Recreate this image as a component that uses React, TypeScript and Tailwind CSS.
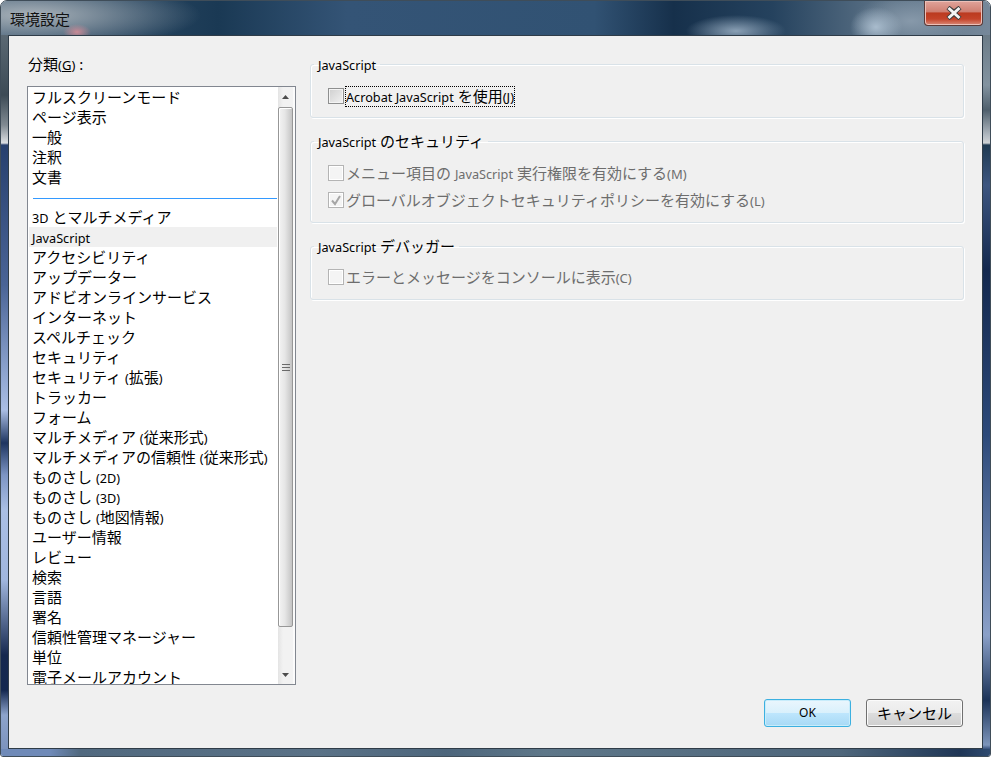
import { FC, ReactNode } from "react";

const FONT = "font-['Noto_Sans','Noto_Sans_CJK_JP',sans-serif]";

// Latin runs are set smaller than the kana around them
const L: FC<{ children: ReactNode }> = ({ children }) => (
  <span className="text-[12.7px]">{children}</span>
);

const Key: FC<{ k: string }> = ({ k }) => (
  <span className="text-[13px]">
    (<span className="underline">{k}</span>)
  </span>
);

const categories: ReactNode[] = [
  "フルスクリーンモード",
  "ページ表示",
  "一般",
  "注釈",
  "文書",
  null,
  <><L>3D</L> とマルチメディア</>,
  <L>JavaScript</L>,
  "アクセシビリティ",
  "アップデーター",
  "アドビオンラインサービス",
  "インターネット",
  "スペルチェック",
  "セキュリティ",
  <>セキュリティ <L>(</L>拡張<L>)</L></>,
  "トラッカー",
  "フォーム",
  <>マルチメディア <L>(</L>従来形式<L>)</L></>,
  <>マルチメディアの信頼性 <L>(</L>従来形式<L>)</L></>,
  <>ものさし <L>(2D)</L></>,
  <>ものさし <L>(3D)</L></>,
  <>ものさし <L>(</L>地図情報<L>)</L></>,
  "ユーザー情報",
  "レビュー",
  "検索",
  "言語",
  "署名",
  "信頼性管理マネージャー",
  "単位",
  "電子メールアカウント",
];

const Arrow: FC<{ down?: boolean }> = ({ down }) => (
  <svg width="7" height="4" viewBox="0 0 7 4" className="block">
    <path d={down ? "M0 0h7L3.5 4z" : "M3.5 0L7 4H0z"} fill="#4d4d4d" />
  </svg>
);

const Scrollbar: FC = () => (
  <div className="flex w-[17px] shrink-0 flex-col bg-[linear-gradient(90deg,#e4e4e4,#f2f2f2_30%,#f2f2f2_88%,#fbfbfb_88%)]">
    <div className="flex h-[20px] w-[15px] shrink-0 items-center justify-center">
      <Arrow />
    </div>
    <div className="flex h-[520px] w-[15px] shrink-0 flex-col items-center justify-center gap-[2px] rounded-[2px] border border-[#979797] bg-[linear-gradient(90deg,#f3f3f3,#e6e6e6_45%,#c4c4c4)] shadow-[inset_1px_1px_0_#fff]">
      <span className="h-px w-[8px] bg-[#6a6a6a]" />
      <span className="h-px w-[8px] bg-[#6a6a6a]" />
      <span className="h-px w-[8px] bg-[#6a6a6a]" />
    </div>
    <div className="flex-1" />
    <div className="flex h-[19px] w-[15px] shrink-0 items-center justify-center">
      <Arrow down />
    </div>
  </div>
);

const CategoryList: FC = () => (
  <div className="flex h-[599px] overflow-hidden border border-[#828790] bg-white">
    <ul className="min-w-0 flex-1 pl-px pr-px text-[15px] leading-[20px] text-black">
      {categories.map((item, i) =>
        item === null ? (
          <li key={i} className="flex h-[20px] items-center pl-[4px] pt-[2px]">
            <span className="h-px w-full bg-[#3399ff]" />
          </li>
        ) : (
          <li
            key={i}
            className={`h-[20px] whitespace-nowrap pl-[3px] ${i === 7 ? "bg-[#f0f0f0]" : ""}`}
          >
            {item}
          </li>
        ),
      )}
    </ul>
    <Scrollbar />
  </div>
);

const Checkbox: FC<{ checked?: boolean; disabled?: boolean }> = ({ checked, disabled }) => (
  <span
    className={`flex size-[16px] shrink-0 items-center justify-center border ${
      disabled
        ? "border-[#b4b4b4] bg-[#f4f4f4] shadow-[inset_0_0_0_1px_#fff]"
        : "border-[#8e8f8f] bg-[linear-gradient(135deg,#cfcfcf,#f2f2f2)] shadow-[inset_0_0_0_1px_#f4f4f4]"
    }`}
  >
    {checked && (
      <svg width="12" height="12" viewBox="0 0 12 12">
        <path d="M2 6.5l3 3.5 5-8" fill="none" stroke="#a6a6a6" strokeWidth="2" />
      </svg>
    )}
  </span>
);

const Group: FC<{ title: ReactNode; className?: string; children: ReactNode }> = ({
  title,
  className,
  children,
}) => (
  <fieldset
    className={`rounded-[3px] border border-[#d9e2e8] pb-[12px] pl-[17px] shadow-[inset_1px_1px_0_#fff,1px_1px_0_#fff] ${className ?? ""}`}
  >
    <legend className="ml-[-14px] px-[4px] text-[15px] leading-[18px] text-black">{title}</legend>
    {children}
  </fieldset>
);

const DisabledRow: FC<{ className?: string; children: ReactNode }> = ({ className, children }) => (
  <div className={`flex h-[20px] items-center gap-[2px] text-[15px] text-[#6d6d6d] ${className ?? ""}`}>
    <Checkbox disabled={true} checked={false} />
    <span className="whitespace-nowrap">{children}</span>
  </div>
);

const App: FC = () => {
  return (
    <div
      className={`flex h-[757px] w-[991px] flex-col overflow-hidden rounded-t-[7px] rounded-b-[3px] border border-[#3f4d59] shadow-[inset_0_1px_0_#e4e9ee] ${FONT}`}
    >
      <header className="flex h-[34px] shrink-0 items-start justify-between bg-[radial-gradient(14px_8px_at_76px_31px,#c98a96,transparent),radial-gradient(170px_34px_at_30px_14px,#a9b2b9,transparent),radial-gradient(50px_16px_at_735px_30px,#8aa0b5,transparent),radial-gradient(26px_20px_at_875px_26px,#a9bccd,transparent),radial-gradient(60px_26px_at_910px_20px,#8799aa,transparent),linear-gradient(90deg,#3a5670,#1a3954_22%,#345476_35%,#315273_60%,#16304b_68%,#25425e_78%,#5f7589_90%,#76889a)] pl-[9px] pr-[7px]">
        <h1 className="pt-[7px] text-[15px] font-normal leading-[22px] text-[#111]">環境設定</h1>
        <button
          type="button"
          className="flex h-[25px] w-[59px] items-center justify-center rounded-b-[4px] border border-t-0 border-[#5a3a38] bg-[linear-gradient(#e0a49b,#cf7f72_45%,#bb3a20_50%,#c4432a_75%,#d98a78)] shadow-[inset_0_0_0_1px_#ecc0b8]"
        >
          <svg width="16" height="14" viewBox="0 0 16 14">
            <path
              d="M2 1.5l6 4.5 6-4.5M2 12.5l6-5 6 5M2 1.5l12 11M14 1.5l-12 11"
              fill="none"
              stroke="#3b3b3b"
              strokeWidth="4.5"
            />
            <path d="M2.5 2l11 10M13.5 2l-11 10" fill="none" stroke="#f4f4f4" strokeWidth="3" />
          </svg>
        </button>
      </header>
      <div className="flex flex-1">
        <div className="w-[7px] shrink-0 bg-[linear-gradient(#5a6873,#3c4a55_60px,#808a92_90px,#dcdfe2_108px,#27406e_110px,#4a6496_250px,#8fa6d0_340px,#aabee4_375px,#1e3560_408px,#7d95c4_440px,#aabfe4_475px,#a0b6de_545px,#16294f_620px,#14284f_655px,#8da4cc_680px,#7c93bd)]" />
        <main className="flex flex-1 flex-col border border-[#2f3c48] bg-[#f0f0f0]">
          <div className="flex gap-[14px] pl-[18px] pt-[19px]">
            <section className="w-[269px] shrink-0">
              <div className="mb-[12px] pl-px text-[15px] leading-[18px] text-black">
                分類<Key k="G" /> :
              </div>
              <CategoryList />
            </section>
            <section className="flex w-[654px] flex-col">
              <Group title={<L>JavaScript</L>} className="h-[63px]">
                <div className="mt-[12px] flex h-[20px] items-center gap-[2px]">
                  <Checkbox />
                  <span className="whitespace-nowrap text-[15px] leading-[18px] text-black outline-1 outline-dotted outline-black">
                    <L>Acrobat JavaScript</L> を使用<Key k="J" />
                  </span>
                </div>
              </Group>
              <Group
                title={<><L>JavaScript</L> のセキュリティ</>}
                className="mt-[14px] h-[91px]"
              >
                <DisabledRow className="mt-[12px]">
                  メニュー項目の <L>JavaScript</L> 実行権限を有効にする<span className="text-[13px]">(M)</span>
                </DisabledRow>
                <div className="mt-[7px] flex h-[20px] items-center gap-[2px] text-[15px] text-[#6d6d6d]">
                  <Checkbox disabled={true} checked={true} />
                  <span className="whitespace-nowrap">
                    グローバルオブジェクトセキュリティポリシーを有効にする<span className="text-[13px]">(L)</span>
                  </span>
                </div>
              </Group>
              <Group
                title={<><L>JavaScript</L> デバッガー</>}
                className="mt-[14px] h-[63px]"
              >
                <DisabledRow className="mt-[11px]">
                  エラーとメッセージをコンソールに表示<span className="text-[13px]">(C)</span>
                </DisabledRow>
              </Group>
            </section>
          </div>
          <footer className="mt-[14px] flex justify-end gap-[15px] pr-[19px]">
            <button
              type="button"
              className="h-[28px] w-[87px] rounded-[3px] border border-[#3cb0e0] bg-[linear-gradient(#eaf6fd,#d9f0fc_50%,#bee6fd_50%,#a7d9f5)] text-[12px] text-black shadow-[inset_0_0_0_1px_#c8ecfb]"
            >
              OK
            </button>
            <button
              type="button"
              className="h-[28px] w-[97px] rounded-[3px] border border-[#707070] bg-[linear-gradient(#f2f2f2,#ebebeb_50%,#dddddd_50%,#cfcfcf)] text-[15px] text-black shadow-[inset_0_0_0_1px_#fbfbfb]"
            >
              キャンセル
            </button>
          </footer>
        </main>
        <div className="w-[7px] shrink-0 bg-[linear-gradient(#6c7c88,#8393a0_50px,#4f5f6c_75px,#b0b8c0_100px,#cfd3d6_108px,#1f3a52_110px,#3d5680_150px,#13284e_235px,#2d4a7a_400px,#8aa0c8_600px,#1c3358_665px,#7d95bb_710px,#36507c)]" />
      </div>
      <div className="h-[7px] shrink-0 bg-[linear-gradient(90deg,#6f8ab8,#6f8ab8_5%,#51697f_8%,#5a7287_32%,#4d667c_45%,#5e7789_55%,#4e667b_85%,#1f3656_97%,#2e4a70)]" />
    </div>
  );
};

export default App;
